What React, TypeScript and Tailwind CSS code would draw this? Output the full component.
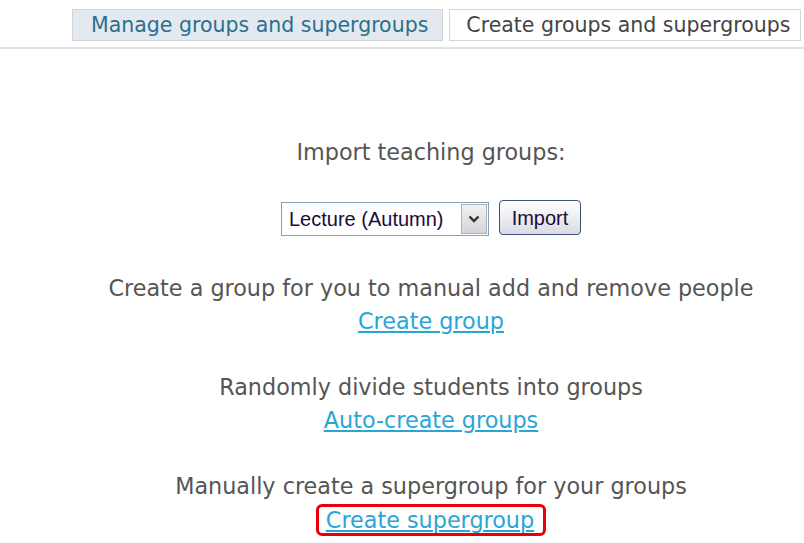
const Block = ({ text, link, boxed }: { text: string; link: string; boxed?: boolean }) => (
  <div className="flex flex-col items-center">
    <p className="text-[22.3px] leading-[33px] text-[#555]">{text}</p>
    <a
      href="#"
      className={
        boxed
          ? "h-[32px] text-[22.3px] leading-[26px] text-[#29a6d6] underline underline-offset-2 border-[3px] border-[#e8000b] rounded-[6px] pl-[7px] pr-[9px] mt-[1px]"
          : "text-[22.3px] leading-[33px] text-[#29a6d6] underline underline-offset-2"
      }
    >
      {link}
    </a>
  </div>
);

export default function App() {
  return (
    <div className="w-[804px] h-[543px] bg-white overflow-hidden font-['DejaVu_Sans',Verdana,sans-serif]">
      <div className="pt-[9px] pl-[72px] flex gap-[6px] h-[49px] border-b-2 border-[#e2e2e2]">
        <div className="h-[32px] pl-[18px] pr-[14px] bg-[#e3e9ee] border border-[#cfd4d8] text-[#2b6f8f] text-[20.5px] leading-[31px] whitespace-nowrap">
          Manage groups and supergroups
        </div>
        <div className="h-[32px] pl-[16px] pr-[10px] bg-white border border-[#d6d6d6] text-[#444] text-[20.5px] leading-[31px] whitespace-nowrap">
          Create groups and supergroups
        </div>
      </div>

      <div className="pl-[58px] flex flex-col items-center">
        <p className="mt-[87px] text-[22.3px] leading-[33px] text-[#555]">Import teaching groups:</p>

        <div className="mt-[33px] flex items-center gap-[10px] font-['Liberation_Sans',Arial,sans-serif]">
          <div className="w-[208px] h-[34px] border border-[#8aa0b8] flex items-center justify-between pl-[7px] pr-[1px]">
            <span className="text-[20px] text-[#1c0c3a]">Lecture (Autumn)</span>
            <span className="w-[26px] h-[30px] border border-[#a8b0b8] bg-gradient-to-b from-[#f2f2f2] to-[#d2d4d8] flex items-center justify-center">
              <svg width="12" height="8" viewBox="0 0 12 8">
                <path d="M1.5 1.5 L6 6 L10.5 1.5" stroke="#333" strokeWidth="2.4" fill="none" />
              </svg>
            </span>
          </div>
          <button className="w-[82px] h-[35px] -mt-[3px] rounded-[4px] border border-[#3a5270] bg-gradient-to-b from-white to-[#dcdbe6] text-[20px] text-[#1c0c3a]">
            Import
          </button>
        </div>

        <div className="mt-[36px] flex flex-col gap-[33px]">
          <Block text="Create a group for you to manual add and remove people" link="Create group" />
          <Block text="Randomly divide students into groups" link="Auto-create groups" />
          <Block text="Manually create a supergroup for your groups" link="Create supergroup" boxed />
        </div>
      </div>
    </div>
  );
}
